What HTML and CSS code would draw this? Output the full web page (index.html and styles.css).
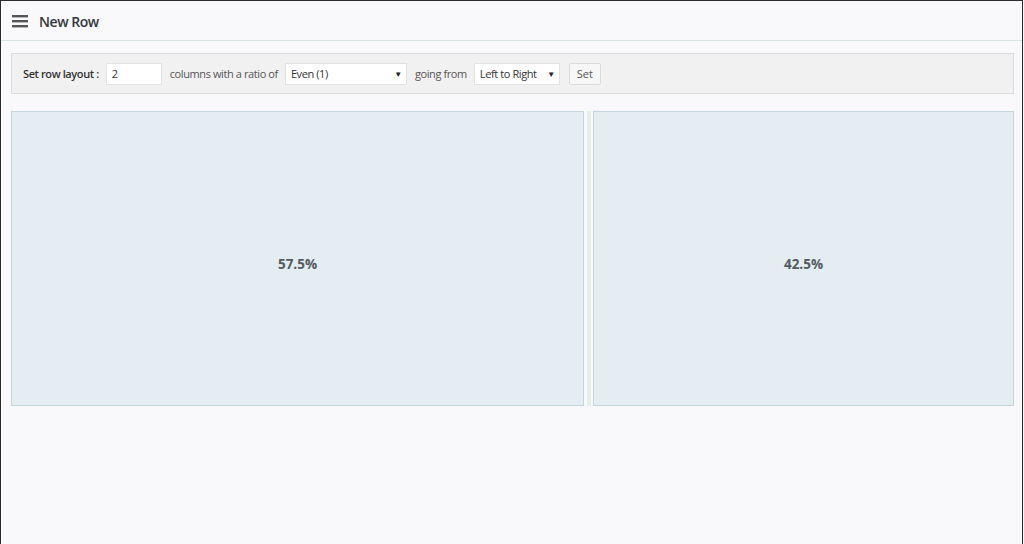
FILE: index.html
```html
<!DOCTYPE html>
<html>
<head>
<meta charset="utf-8">
<link rel="stylesheet" href="styles.css">
</head>
<body>
<div class="frame">
  <header class="topbar">
    <svg class="menu-icon" width="16" height="13" viewBox="0 0 16 13">
      <rect x="0" y="0" width="16" height="2.4" fill="#555"/>
      <rect x="0" y="5" width="16" height="2.4" fill="#555"/>
      <rect x="0" y="10" width="16" height="2.4" fill="#555"/>
    </svg>
    <h1 class="title">New Row</h1>
  </header>
  <main class="content">
    <div class="toolbar">
      <span class="label">Set row layout :</span>
      <input class="num-input" type="text" value="2">
      <span class="text">columns with a ratio of</span>
      <div class="select select-ratio"><span>Even (1)</span><span class="caret">▼</span></div>
      <span class="text">going from</span>
      <div class="select select-dir"><span>Left to Right</span><span class="caret">▼</span></div>
      <button class="btn">Set</button>
    </div>
    <div class="columns">
      <div class="col col-left"><span class="pct">57.5%</span></div>
      <div class="splitter"><div class="splitter-bar"></div></div>
      <div class="col col-right"><span class="pct">42.5%</span></div>
    </div>
  </main>
</div>
</body>
</html>
```
FILE: styles.css
```css
html, body {
  margin: 0;
  padding: 0;
  background: #f9f9fb;
}
body {
  font-family: "Open Sans", "Noto Sans", sans-serif;
  color: #333;
}
.frame {
  box-sizing: border-box;
  width: 1023px;
  height: 544px;
  border-top: 1px solid #2b2b2b;
  border-left: 1px solid #2b2b2b;
  border-right: 1px solid #2b2b2b;
  background: #f9f9fb;
}
.topbar {
  box-sizing: border-box;
  height: 40px;
  border-bottom: 1px solid #d4e4e4;
  display: flex;
  align-items: center;
  padding-left: 11px;
}
.menu-icon {
  display: block;
  margin-top: 1px;
}
.title {
  margin: 1px 0 0 11px;
  font-size: 14px;
  font-weight: 600;
  color: #32373c;
  letter-spacing: -0.45px;
}
.content {
  padding: 12px 8px 0 10px;
}
.toolbar {
  box-sizing: border-box;
  height: 41px;
  background: #f1f1f1;
  border: 1px solid #dcdcdc;
  display: flex;
  align-items: center;
  padding-left: 11px;
  font-size: 11px;
  letter-spacing: -0.4px;
}
.label {
  font-weight: 600;
  color: #333;
  margin-right: 7px;
}
.num-input {
  box-sizing: border-box;
  width: 56px;
  height: 22px;
  border: 1px solid #e2e2e2;
  background: #fff;
  font-family: inherit;
  font-size: 11px;
  color: #333;
  padding: 0 5px;
  margin: 0 8px 0 0;
  outline: none;
}
.text {
  color: #555;
  margin-right: 7px;
}
.select {
  box-sizing: border-box;
  height: 22px;
  background: #fff;
  border: 1px solid #e2e2e2;
  display: flex;
  align-items: center;
  justify-content: space-between;
  padding: 0 4px 0 5px;
  color: #333;
  margin-right: 8px;
}
.select-ratio {
  width: 122px;
}
.select-dir {
  width: 86px;
}
.caret {
  font-size: 8px;
  color: #222;
}
.btn {
  box-sizing: border-box;
  height: 22px;
  width: 32px;
  background: #f7f7f7;
  border: 1px solid #dcdcdc;
  border-radius: 2px;
  font-family: inherit;
  font-size: 11px;
  color: #555;
  padding: 0;
  margin-left: 1px;
}
.columns {
  display: flex;
  margin-top: 17px;
  height: 295px;
}
.col {
  box-sizing: border-box;
  background: #e3edf2;
  border: 1px solid #c4d6dc;
  display: flex;
  align-items: center;
  justify-content: center;
}
.col-left {
  width: 573px;
}
.col-right {
  width: 421px;
}
.splitter {
  width: 9px;
  display: flex;
  justify-content: center;
}
.splitter-bar {
  width: 4px;
  background: #e4f1e4;
}
.pct {
  font-size: 13.5px;
  font-weight: 700;
  color: #555a60;
  margin-top: 10px;
}
```
